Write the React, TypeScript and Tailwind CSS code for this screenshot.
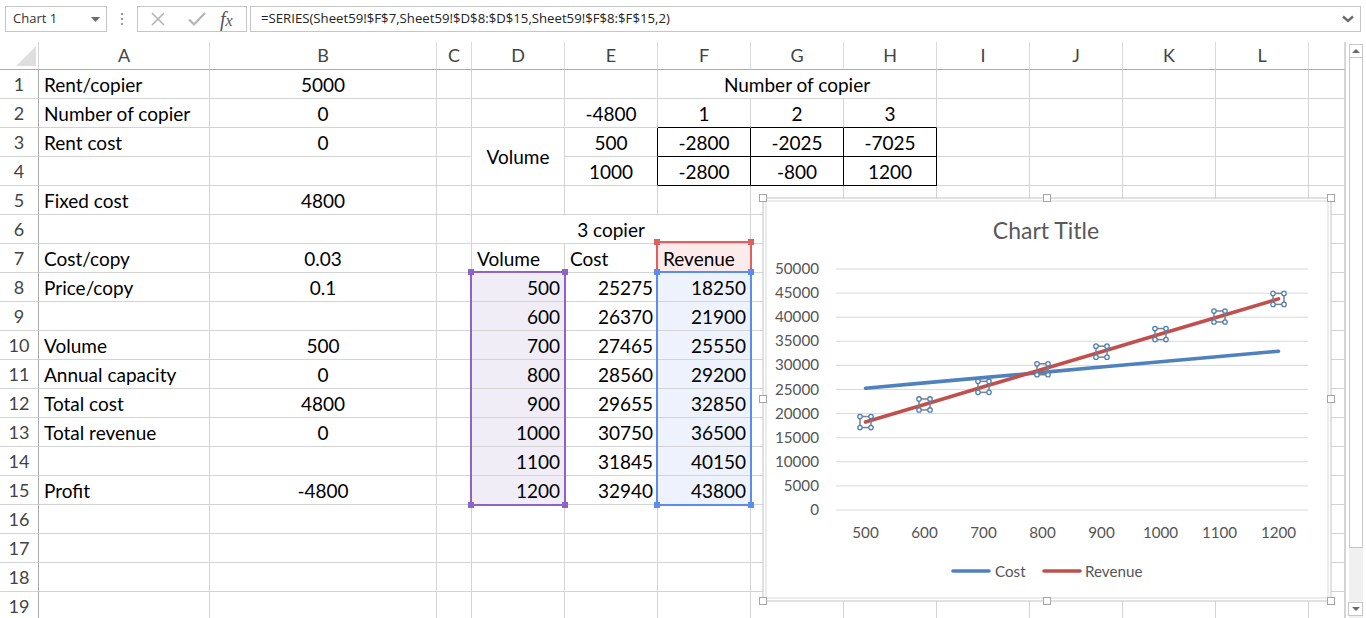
import React from "react";

type Cell = {
  t?: string;
  a?: "l" | "c" | "r";
  span?: string;
  skip?: boolean;
  cls?: string;
};

const COLS = ["A", "B", "C", "D", "E", "F", "G", "H", "I", "J", "K", "L", "M"];
const VOL = [500, 600, 700, 800, 900, 1000, 1100, 1200];
const COST = [25275, 26370, 27465, 28560, 29655, 30750, 31845, 32940];
const REV = [18250, 21900, 25550, 29200, 32850, 36500, 40150, 43800];

const data: Record<string, Cell> = {
  A1: { t: "Rent/copier" }, B1: { t: "5000", a: "c" },
  F1: { t: "Number of copier", a: "c", span: "col-span-3" }, G1: { skip: true }, H1: { skip: true },
  A2: { t: "Number of copier" }, B2: { t: "0", a: "c" },
  E2: { t: "-4800", a: "c" },
  F2: { t: "1", a: "c", cls: "border-b-black" },
  G2: { t: "2", a: "c", cls: "border-b-black" },
  H2: { t: "3", a: "c", cls: "border-b-black" },
  A3: { t: "Rent cost" }, B3: { t: "0", a: "c" },
  D3: { t: "Volume", a: "c", span: "row-span-2" },
  E3: { t: "500", a: "c", cls: "border-r-black" },
  F3: { t: "-2800", a: "c", cls: "border-r-black border-b-black" },
  G3: { t: "-2025", a: "c", cls: "border-r-black border-b-black" },
  H3: { t: "-7025", a: "c", cls: "border-r-black border-b-black" },
  D4: { skip: true },
  E4: { t: "1000", a: "c", cls: "border-r-black" },
  F4: { t: "-2800", a: "c", cls: "border-r-black border-b-black" },
  G4: { t: "-800", a: "c", cls: "border-r-black border-b-black" },
  H4: { t: "1200", a: "c", cls: "border-r-black border-b-black" },
  A5: { t: "Fixed cost" }, B5: { t: "4800", a: "c" },
  D6: { t: "3 copier", a: "c", span: "col-span-3" }, E6: { skip: true }, F6: { skip: true },
  A7: { t: "Cost/copy" }, B7: { t: "0.03", a: "c" },
  D7: { t: "Volume" }, E7: { t: "Cost" }, F7: { t: "Revenue", cls: "bg-[#fdeaea]" },
  A8: { t: "Price/copy" }, B8: { t: "0.1", a: "c" },
  A10: { t: "Volume" }, B10: { t: "500", a: "c" },
  A11: { t: "Annual capacity" }, B11: { t: "0", a: "c" },
  A12: { t: "Total cost" }, B12: { t: "4800", a: "c" },
  A13: { t: "Total revenue" }, B13: { t: "0", a: "c" },
  A15: { t: "Profit" }, B15: { t: "-4800", a: "c" },
};

VOL.forEach((v, i) => {
  const r = i + 8;
  data["D" + r] = { t: String(v), a: "r", cls: "bg-[#f0edf7]" };
  data["E" + r] = { t: String(COST[i]), a: "r" };
  data["F" + r] = { t: String(REV[i]), a: "r", cls: "bg-[#edf2fc]" };
});

const px = (i: number) => 865.5 + i * 59;
const py = (v: number) => 510 - (v / 50000) * 241;

function Chart() {
  const ticks = [0, 5000, 10000, 15000, 20000, 25000, 30000, 35000, 40000, 45000, 50000];
  const handles: [number, number][] = [
    [763, 198], [1047, 198], [1331, 198],
    [763, 399], [1331, 399],
    [763, 601], [1047, 601], [1331, 601],
  ];
  const font = "Lato, sans-serif";
  return (
    <svg
      className="absolute left-[758px] top-[193px]"
      width={580}
      height={414}
      viewBox="758 193 580 414"
    >
      <rect x={763} y={198} width={568} height={403} fill="#fff" stroke="#c4c4c4" />
      <rect x={766} y={201} width={562} height={397} fill="none" stroke="#d9d9d9" />
      <text x={1046} y={239} textAnchor="middle" fontSize={23} fill="#595959" fontFamily={font}>
        Chart Title
      </text>
      {ticks.map(t => (
        <g key={t}>
          <line x1={836} x2={1308} y1={py(t)} y2={py(t)} stroke="#d9d9d9" strokeWidth={1} />
          <text x={819} y={py(t) + 5} textAnchor="end" fontSize={15.2} fill="#555" fontFamily={font}>
            {t}
          </text>
        </g>
      ))}
      {VOL.map((v, i) => (
        <text key={v} x={px(i)} y={538} textAnchor="middle" fontSize={15.2} fill="#555" fontFamily={font}>
          {v}
        </text>
      ))}
      <polyline
        points={COST.map((c, i) => `${px(i)},${py(c)}`).join(" ")}
        fill="none" stroke="#4f81bd" strokeWidth={3.6} strokeLinecap="round" strokeLinejoin="round"
      />
      <polyline
        points={REV.map((c, i) => `${px(i)},${py(c)}`).join(" ")}
        fill="none" stroke="#c0504d" strokeWidth={3.6} strokeLinecap="round" strokeLinejoin="round"
      />
      {REV.map((c, i) => {
        const x = px(i), y = py(c);
        return (
          <g key={i}>
            <rect x={x - 5.5} y={y - 5.5} width={11} height={11} fill="none" stroke="#7f7f7f" strokeWidth={1.5} />
            {[[-5.5, -5.5], [5.5, -5.5], [-5.5, 5.5], [5.5, 5.5]].map(([dx, dy], k) => (
              <circle key={k} cx={x + dx} cy={y + dy} r={2.2} fill="#fff" stroke="#4f7fb8" strokeWidth={1.3} />
            ))}
          </g>
        );
      })}
      <line x1={953} x2={989} y1={571} y2={571} stroke="#4f81bd" strokeWidth={3.6} strokeLinecap="round" />
      <text x={995} y={577} fontSize={15.2} fill="#555" fontFamily={font}>Cost</text>
      <line x1={1044} x2={1080} y1={571} y2={571} stroke="#c0504d" strokeWidth={3.6} strokeLinecap="round" />
      <text x={1085} y={577} fontSize={15.2} fill="#555" fontFamily={font}>Revenue</text>
      {handles.map(([x, y], i) => (
        <rect key={i} x={x - 3.5} y={y - 3.5} width={7} height={7} fill="#fff" stroke="#a6a6a6" />
      ))}
    </svg>
  );
}

function SelBox({ cls, color }: { cls: string; color: string }) {
  return (
    <div className={`absolute border-2 ${cls}`}>
      <span className={`absolute -left-[4px] -top-[4px] w-[6px] h-[6px] ${color}`} />
      <span className={`absolute -right-[4px] -top-[4px] w-[6px] h-[6px] ${color}`} />
      <span className={`absolute -left-[4px] -bottom-[4px] w-[6px] h-[6px] ${color}`} />
      <span className={`absolute -right-[4px] -bottom-[4px] w-[6px] h-[6px] ${color}`} />
    </div>
  );
}

export default function App() {
  const rows = Array.from({ length: 19 }, (_, i) => i + 1);
  return (
    <div className="relative w-[1366px] h-[618px] overflow-hidden bg-white font-[Lato,sans-serif] text-black">
      {/* formula bar */}
      <div className="flex items-start h-[42px] pt-[6px] font-['Open_Sans',sans-serif]">
        <div className="ml-[5px] w-[102px] h-[26px] border border-[#c6c6c6] flex items-center justify-between pl-[7px] pr-[6px] text-[13px] text-[#333]">
          <span>Chart 1</span>
          <svg width="9" height="5" viewBox="0 0 9 5"><path d="M0 0h9L4.5 5z" fill="#6b6b6b" /></svg>
        </div>
        <div className="w-[30px] h-[26px] flex flex-col items-center justify-center gap-[3px]">
          <span className="w-[2px] h-[2px] bg-[#9a9a9a]" />
          <span className="w-[2px] h-[2px] bg-[#9a9a9a]" />
          <span className="w-[2px] h-[2px] bg-[#9a9a9a]" />
        </div>
        <div className="w-[110px] h-[26px] border border-[#c6c6c6] flex items-center">
          <svg className="ml-[12px]" width="16" height="16" viewBox="0 0 16 16">
            <path d="M2 2L14 14M14 2L2 14" stroke="#b4b4b4" strokeWidth="1.6" />
          </svg>
          <svg className="ml-[22px]" width="18" height="16" viewBox="0 0 18 16">
            <path d="M1 8.5L6 13.5L17 2" stroke="#b4b4b4" strokeWidth="2.2" fill="none" />
          </svg>
          <span className="ml-[14px] font-['Liberation_Serif',serif] italic text-[20px] text-[#555] leading-none">
            f<span className="text-[16px]">x</span>
          </span>
        </div>
        <div className="ml-[3px] w-[1111px] h-[26px] border border-[#c6c6c6] flex items-center justify-between pl-[10px] pr-[6px] text-[13.2px] text-[#222]">
          <span>=SERIES(Sheet59!$F$7,Sheet59!$D$8:$D$15,Sheet59!$F$8:$F$15,2)</span>
          <svg width="12" height="8" viewBox="0 0 12 8"><path d="M1 1.5L6 6L11 1.5" stroke="#6b6b6b" strokeWidth="2.4" fill="none" /></svg>
        </div>
      </div>

      {/* sheet */}
      <div className="flex">
        <div className="grid grid-cols-[39px_171px_227px_35px_repeat(9,93px)_36px] grid-rows-[28px_repeat(19,29px)] w-[1345px]">
          <div className="border-r border-b border-[#ababab] border-r-[#d4d4d4] flex items-end justify-end pr-[2px] pb-[3px]">
            <svg width="20" height="20" viewBox="0 0 20 20"><path d="M20 0V20H0z" fill="#dfdfdf" /></svg>
          </div>
          {COLS.map(c => (
            <div key={c} className="border-r border-b border-r-[#dadada] border-b-[#ababab] flex items-center justify-center text-[18px] text-[#444]">
              {c === "M" ? "" : c}
            </div>
          ))}
          {rows.map(r => (
            <React.Fragment key={r}>
              <div className="border-r border-b border-r-[#ababab] border-b-[#d4d4d4] flex items-center justify-center text-[18px] text-[#444]">
                {r}
              </div>
              {COLS.map(c => {
                const d = data[c + r] ?? {};
                if (d.skip) return null;
                const align =
                  d.a === "c" ? "justify-center" : d.a === "r" ? "justify-end pr-[4px]" : "justify-start pl-[5px]";
                return (
                  <div
                    key={c}
                    className={`border-r border-b border-[#d4d4d4] flex items-center whitespace-nowrap text-[19px] leading-none ${align} ${d.span ?? ""} ${d.cls ?? ""}`}
                  >
                    {d.t}
                  </div>
                );
              })}
            </React.Fragment>
          ))}
        </div>
        <div className="w-[21px] flex flex-col pl-[3px] pr-[3px] pt-[2px] border-l border-[#d4d4d4]">
          <div className="h-[14px] border border-[#c6c6c6] flex items-center justify-center">
            <svg width="8" height="4" viewBox="0 0 8 4"><path d="M0 4h8L4 0z" fill="#6b6b6b" /></svg>
          </div>
          <div className="h-[490px] border border-t-0 border-[#c6c6c6] bg-white" />
          <div className="flex-1 bg-[#f0f0f0]" />
        </div>
      </div>

      <div className="absolute left-[1348px] top-[602px] w-[15px] h-[14px] border border-[#c6c6c6] bg-white flex items-center justify-center">
        <svg width="8" height="4" viewBox="0 0 8 4"><path d="M0 0h8L4 4z" fill="#6b6b6b" /></svg>
      </div>

      <SelBox cls="left-[656px] top-[241px] w-[96px] h-[32px] border-[#e06060]" color="bg-[#e06060]" />
      <SelBox cls="left-[470px] top-[271px] w-[96px] h-[235px] border-[#8e63c7]" color="bg-[#8e63c7]" />
      <SelBox cls="left-[656px] top-[271px] w-[96px] h-[235px] border-[#5b8def]" color="bg-[#5b8def]" />

      <Chart />
    </div>
  );
}
